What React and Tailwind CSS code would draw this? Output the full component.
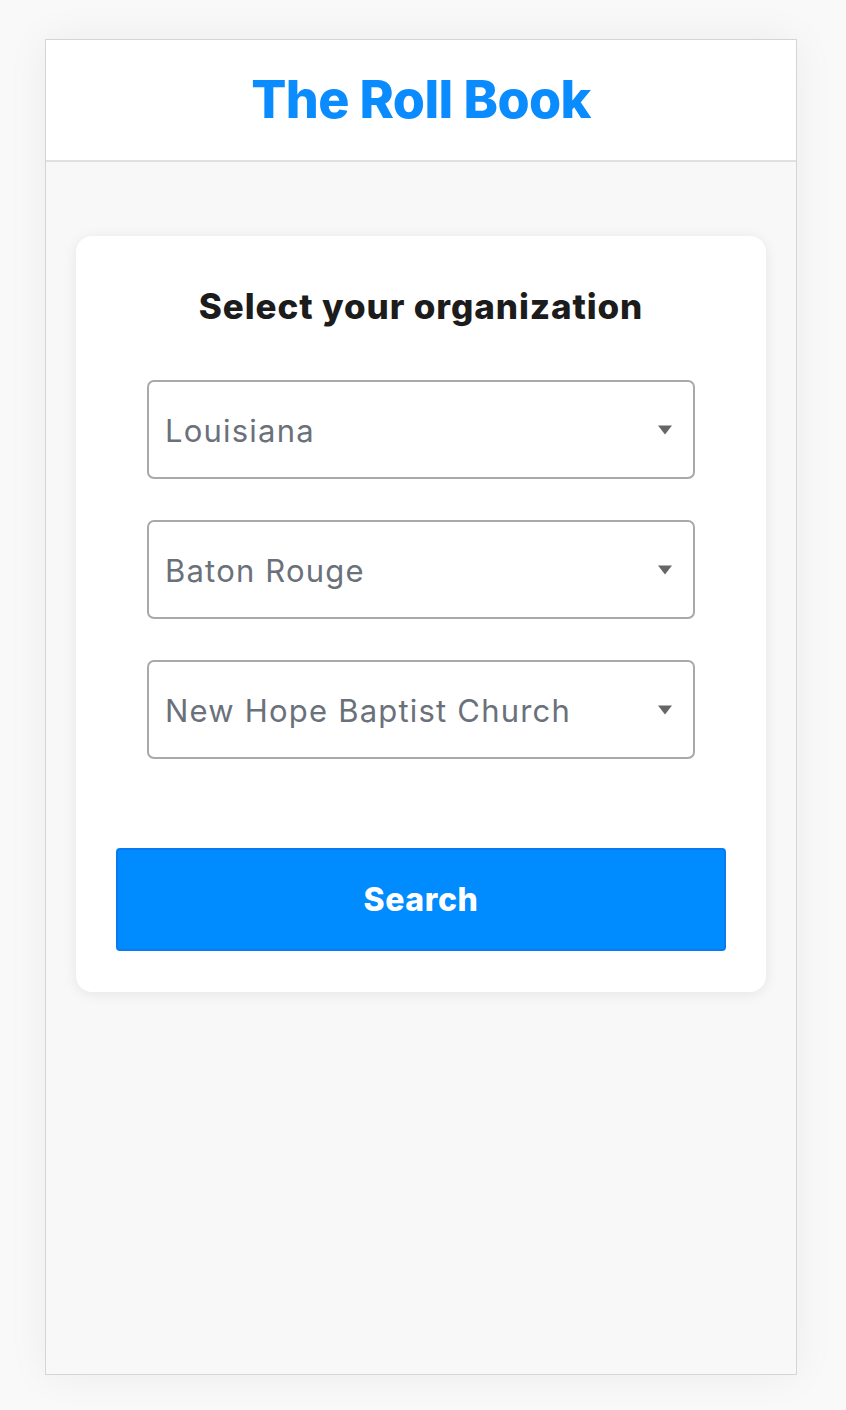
import { useState } from "react";

const font = { fontFamily: "Inter, 'Noto Sans', sans-serif" };

function Caret() {
  return (
    <svg width="16" height="10" viewBox="0 0 16 10" className="shrink-0">
      <path d="M1 0.5 L15 0.5 L8 9.5 Z" fill="#666666" />
    </svg>
  );
}

function SelectBox({ value }) {
  return (
    <div className="flex h-[99px] w-full items-center justify-between rounded-[7px] border-2 border-[#a9a9a9] bg-white pl-[16px] pr-[20px]">
      <span className="pt-[3px] text-[31px] tracking-[1.2px] text-[#6b717a]">{value}</span>
      <Caret />
    </div>
  );
}

export default function App() {
  const [picks] = useState(["Louisiana", "Baton Rouge", "New Hope Baptist Church"]);

  return (
    <div className="min-h-screen bg-[#f9f9f9] px-[45px] pt-[39px]" style={font}>
      <div className="flex h-[1336px] w-[752px] flex-col border border-[#d5d5d5] bg-[#f8f8f8] shadow-[0_0_40px_rgba(0,0,0,0.06)]">
        {/* Header */}
        <div className="flex h-[122px] items-center justify-center border-b-2 border-[#e0e0e0] bg-white">
          <h1 className="text-[52px] font-extrabold tracking-[-0.6px] text-[#0a8cff]">The Roll Book</h1>
        </div>

        {/* Card */}
        <div className="px-[30px] pt-[74px]">
          <div className="flex flex-col items-center rounded-[16px] bg-white px-[40px] pb-[41px] pt-[50px] shadow-[0_2px_14px_rgba(0,0,0,0.08)]">
            <h2 className="text-[35px] font-extrabold leading-[40px] tracking-[0.9px] text-[#1c1c1c]">Select your organization</h2>

            <div className="mt-[54px] flex w-[548px] flex-col gap-[41px]">
              {picks.map((p) => (
                <SelectBox key={p} value={p} />
              ))}
            </div>

            <button className="mt-[89px] flex h-[103px] w-full items-center justify-center rounded-[4px] border-2 border-[#0a7af0] bg-[#008cff] text-[32px] font-extrabold tracking-[0.6px] text-white">
              Search
            </button>
          </div>
        </div>
      </div>
    </div>
  );
}
